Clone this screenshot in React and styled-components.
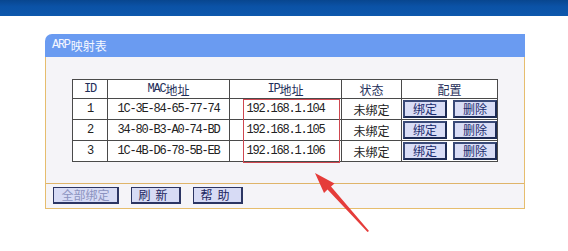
import React from "react";
import styled, { createGlobalStyle } from "styled-components";

const Global = createGlobalStyle`
  html, body { margin: 0; padding: 0; background: #ffffff; }
  body { font-family: "Noto Sans CJK SC", "Liberation Sans", sans-serif; }
`;

const Page = styled.div`
  position: relative;
  width: 568px;
  height: 251px;
  overflow: hidden;
  background: #ffffff;
`;

const TopBar = styled.div`
  height: 16px;
  background: linear-gradient(#08468f, #0b52a6 40%, #0d58ad);
`;

const Main = styled.div`
  padding: 18px 0 0 45px;
`;

const Panel = styled.section`
  width: 480px;
  display: flex;
  flex-direction: column;
`;

const PanelHeader = styled.div`
  height: 23px;
  background: #6a9bf1;
  border-top-left-radius: 7px;
  color: #f4f7ff;
  font-size: 12px;
  line-height: 23px;
  padding-left: 7px;
  display: flex;
  align-items: center;
`;

const HeaderAscii = styled.span`
  font-family: "Liberation Mono", monospace;
  font-size: 12px;
  letter-spacing: -1.3px;
  margin-right: 1px;
`;

const PanelBody = styled.div`
  border: 1px solid #e6bd6e;
  border-top: none;
  background: #f5f4f8;
  display: flex;
  flex-direction: column;
`;

const TableArea = styled.div`
  position: relative;
  padding: 22px 0 21px 26px;
  border-bottom: 1px solid #dfb46a;
`;

const Grid = styled.div`
  display: grid;
  grid-template-columns: 35px 122px 112px 60px 96px;
  grid-template-rows: 19px 21px 21px 21px;
  width: 425px;
  border-top: 1px solid #4a4a4a;
  border-left: 1px solid #4a4a4a;
  background: #ffffff;
`;

const Cell = styled.div`
  box-sizing: border-box;
  border-right: 1px solid #4a4a4a;
  border-bottom: 1px solid #4a4a4a;
  display: flex;
  align-items: center;
  justify-content: ${(p) => (p.$split ? "space-between" : "center")};
  padding: ${(p) => (p.$split ? "0 0 0 1px" : "0")};
  font-size: 12px;
  color: ${(p) => (p.$head ? "#1f2f5a" : "#222222")};
  white-space: nowrap;
`;

const Mono = styled.span`
  font-family: "Liberation Mono", monospace;
  font-size: 12px;
  letter-spacing: -1.2px;
`;

const CfgButton = styled.button`
  box-sizing: border-box;
  width: 44px;
  height: 18px;
  margin: 0;
  padding: 0;
  border: 2px solid #1d2b55;
  border-left-color: #3a4a78;
  border-top-color: #3a4a78;
  background: #d9ddf6;
  color: #1c2c6e;
  font-family: "Noto Sans CJK SC", sans-serif;
  font-size: 12px;
  line-height: 14px;
`;

const RedBox = styled.div`
  position: absolute;
  left: 197px;
  top: 42px;
  width: 97px;
  height: 64px;
  box-sizing: border-box;
  border: 1px solid #cf4750;
  pointer-events: none;
`;

const ButtonRow = styled.div`
  display: flex;
  gap: 12px;
  padding: 3px 0 4px 7px;
`;

const ActionButton = styled.button`
  box-sizing: border-box;
  width: ${(p) => p.$w}px;
  height: 17px;
  margin: 0;
  padding: 0;
  border: 1px solid #2c3563;
  border-right-width: 2px;
  border-bottom-width: 2px;
  background: #d7dbf5;
  color: ${(p) => (p.$disabled ? "#8c93c0" : "#1d2660")};
  font-family: "Noto Sans CJK SC", sans-serif;
  font-size: 12px;
  line-height: 14px;
  letter-spacing: ${(p) => p.$ls || 0}px;
`;

const Arrow = styled.svg`
  position: absolute;
  left: 0;
  top: 0;
  pointer-events: none;
`;

const rows = [
  ["1", "1C-3E-84-65-77-74", "192.168.1.104"],
  ["2", "34-80-B3-A0-74-BD", "192.168.1.105"],
  ["3", "1C-4B-D6-78-5B-EB", "192.168.1.106"],
];

export default function App() {
  return (
    <Page>
      <Global />
      <TopBar />
      <Main>
        <Panel>
          <PanelHeader>
            <HeaderAscii>ARP</HeaderAscii>映射表
          </PanelHeader>
          <PanelBody>
            <TableArea>
              <Grid>
                <Cell $head><Mono>ID</Mono></Cell>
                <Cell $head><Mono>MAC</Mono>地址</Cell>
                <Cell $head><Mono>IP</Mono>地址</Cell>
                <Cell $head>状态</Cell>
                <Cell $head>配置</Cell>
                {rows.map(([id, mac, ip]) => (
                  <React.Fragment key={id}>
                    <Cell><Mono>{id}</Mono></Cell>
                    <Cell><Mono>{mac}</Mono></Cell>
                    <Cell><Mono>{ip}</Mono></Cell>
                    <Cell>未绑定</Cell>
                    <Cell $split>
                      <CfgButton>绑定</CfgButton>
                      <CfgButton>删除</CfgButton>
                    </Cell>
                  </React.Fragment>
                ))}
              </Grid>
              <RedBox />
            </TableArea>
            <ButtonRow>
              <ActionButton $w={66} $disabled>全部绑定</ActionButton>
              <ActionButton $w={50} $ls={5}>刷新</ActionButton>
              <ActionButton $w={50} $ls={5}>帮助</ActionButton>
            </ButtonRow>
          </PanelBody>
        </Panel>
      </Main>
      <Arrow width="568" height="251" viewBox="0 0 568 251">
        <polygon
          points="315,173 334.5,183.5 331,186.5 369,231 367.5,232 327.5,189.5 324,193"
          fill="#e53c3a"
        />
      </Arrow>
    </Page>
  );
}
